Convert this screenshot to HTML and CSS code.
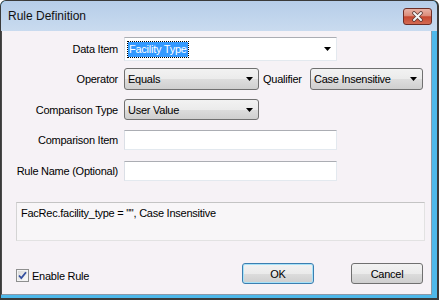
FILE: index.html
```html
<!DOCTYPE html>
<html>
<head>
<meta charset="utf-8">
<link rel="stylesheet" href="styles.css">
</head>
<body>
<div class="window">
  <div class="titlebar">
    <span class="title">Rule Definition</span>
    <div class="close">
      <svg width="13" height="11" viewBox="0 0 13 11">
        <path d="M3 2 L10 9 M10 2 L3 9" stroke="#5b3a36" stroke-width="3.6" stroke-linecap="round" fill="none"/>
        <path d="M3 2 L10 9 M10 2 L3 9" stroke="#f4f4f4" stroke-width="2" stroke-linecap="round" fill="none"/>
      </svg>
    </div>
  </div>
  <div class="client">
    <div class="form">
      <div class="row row1">
        <span class="lbl">Data Item</span>
        <div class="field combo-edit w213">
          <span class="sel">Facility Type</span>
          <svg class="arrow" width="7" height="4" viewBox="0 0 7 4"><path d="M0 0h7L3.5 4z"/></svg>
        </div>
      </div>
      <div class="row row2">
        <span class="lbl">Operator</span>
        <div class="combo w135">
          <span>Equals</span>
          <svg class="arrow" width="7" height="4" viewBox="0 0 7 4"><path d="M0 0h7L3.5 4z"/></svg>
        </div>
        <span class="qual">Qualifier</span>
        <div class="combo w113">
          <span>Case Insensitive</span>
          <svg class="arrow" width="7" height="4" viewBox="0 0 7 4"><path d="M0 0h7L3.5 4z"/></svg>
        </div>
      </div>
      <div class="row row3">
        <span class="lbl">Comparison Type</span>
        <div class="combo w135">
          <span>User Value</span>
          <svg class="arrow" width="7" height="4" viewBox="0 0 7 4"><path d="M0 0h7L3.5 4z"/></svg>
        </div>
      </div>
      <div class="row row4">
        <span class="lbl">Comparison Item</span>
        <div class="field w213"></div>
      </div>
      <div class="row row5">
        <span class="lbl">Rule Name (Optional)</span>
        <div class="field w213"></div>
      </div>
    </div>
    <div class="summary">FacRec.facility_type = "", Case Insensitive</div>
    <div class="footer">
      <div class="check">
        <svg class="box" width="13" height="13" viewBox="0 0 13 13">
          <defs>
            <linearGradient id="cb" x1="0" y1="0" x2="1" y2="1">
              <stop offset="0" stop-color="#d9d9d9"/>
              <stop offset="1" stop-color="#fbfbfb"/>
            </linearGradient>
          </defs>
          <rect x="0.5" y="0.5" width="12" height="12" fill="#f4f4f4" stroke="#8e8f8f"/>
          <rect x="2" y="2" width="9" height="9" fill="url(#cb)"/>
          <path d="M3 6.5 L5.3 9 L10 3.2" stroke="#3550a0" stroke-width="1.8" fill="none"/>
        </svg>
        <span>Enable Rule</span>
      </div>
      <div class="buttons">
        <div class="btn default">OK</div>
        <div class="btn">Cancel</div>
      </div>
    </div>
  </div>
</div>
</body>
</html>
```
FILE: styles.css
```css
html, body {
  margin: 0;
  padding: 0;
  background: #ffffff;
}
body {
  font-family: "Liberation Sans", Arial, sans-serif;
  font-size: 11px;
  letter-spacing: -0.25px;
  color: #000;
}
.window {
  width: 439px;
  height: 300px;
  box-sizing: border-box;
  border-style: solid;
  border-color: #3a3a3a;
  border-width: 1px 2px 2px 1px;
  border-radius: 6px 6px 0 0;
  background: #4db8ea;
  display: flex;
  flex-direction: column;
  overflow: hidden;
}
.titlebar {
  height: 30px;
  flex: none;
  display: flex;
  align-items: center;
  justify-content: space-between;
  background: linear-gradient(#b6cde9, #c9dbef);
  border-radius: 5px 5px 0 0;
}
.title {
  padding-left: 7px;
  font-size: 12px;
  letter-spacing: 0;
  color: #111;
}
.close {
  width: 29px;
  height: 17px;
  box-sizing: border-box;
  margin-right: 5px;
  border: 1px solid #6e2d25;
  border-radius: 3px;
  background: linear-gradient(#e9b2a5 0%, #dc8c79 45%, #c6472f 52%, #d36a52 100%);
  display: flex;
  align-items: center;
  justify-content: center;
}
.close svg { display: block; }
.client {
  flex: 1;
  margin: 0 5px 3px 0;
  background: #f6f2f6;
  border-left: 1px solid #4a4a4a;
  border-right: 1px solid #8a98a8;
  border-bottom: 1px solid #8a98a8;
  display: flex;
  flex-direction: column;
}
.form {
  padding-top: 6px;
  display: flex;
  flex-direction: column;
}
.row {
  display: flex;
  align-items: center;
}
.row1 { height: 24px; }
.row2 { height: 22px; margin-top: 7px; }
.row3 { height: 21px; margin-top: 9px; }
.row4 { height: 20px; margin-top: 10px; }
.row5 { height: 20px; margin-top: 11px; }
.lbl {
  width: 116px;
  margin-right: 6px;
  text-align: right;
  white-space: nowrap;
}
.w213 { width: 213px; }
.w135 { width: 135px; }
.w113 { width: 113px; }
.field {
  height: 100%;
  box-sizing: border-box;
  background: #fff;
  border: 1px solid #e3e9ef;
  border-top-color: #abadb3;
  border-left-color: #dbdfe6;
}
.combo-edit {
  display: flex;
  align-items: center;
  justify-content: space-between;
  padding: 0 5px 0 2px;
}
.sel {
  height: 17px;
  line-height: 15px;
  box-sizing: border-box;
  padding: 0 1px;
  color: #fff;
  border: 1px dotted #000;
  background-color: #e07820;
  background-image: linear-gradient(#3399ff, #3399ff);
  background-clip: padding-box;
  background-origin: padding-box;
  box-shadow: none;
  outline: none;
}
.arrow { display: block; fill: #000; }
.combo {
  height: 100%;
  box-sizing: border-box;
  border: 1px solid #707070;
  border-radius: 3px;
  background: linear-gradient(#f2f2f2 0%, #ebebeb 50%, #dddddd 51%, #cfcfcf 100%);
  display: flex;
  align-items: center;
  justify-content: space-between;
  padding: 0 5px 0 3px;
  white-space: nowrap;
}
.qual {
  width: 51px;
  box-sizing: border-box;
  padding-left: 4px;
  white-space: nowrap;
}
.summary {
  margin: 21px 0 0 14px;
  width: 409px;
  height: 39px;
  box-sizing: border-box;
  padding: 4px 0 0 4px;
  background: #f8f6f8;
  border: 1px solid #e2e2e2;
  border-top-color: #c4c4c4;
  border-left-color: #d4d4d4;
  white-space: nowrap;
}
.footer {
  margin-top: 22px;
  height: 21px;
  padding: 0 8px 0 14px;
  display: flex;
  align-items: center;
  justify-content: space-between;
}
.check {
  display: flex;
  align-items: center;
  gap: 3px;
  padding-top: 4px;
}
.box { display: block; }
.buttons {
  display: flex;
  gap: 37px;
}
.btn {
  width: 72px;
  height: 21px;
  box-sizing: border-box;
  border: 1px solid #707070;
  border-radius: 3px;
  background: linear-gradient(#f2f2f2 0%, #ebebeb 50%, #dddddd 51%, #cfcfcf 100%);
  display: flex;
  align-items: center;
  justify-content: center;
}
.btn.default {
  border-color: #3c7fb1;
  box-shadow: inset 0 0 0 1px #a8e2f8;
}
```
